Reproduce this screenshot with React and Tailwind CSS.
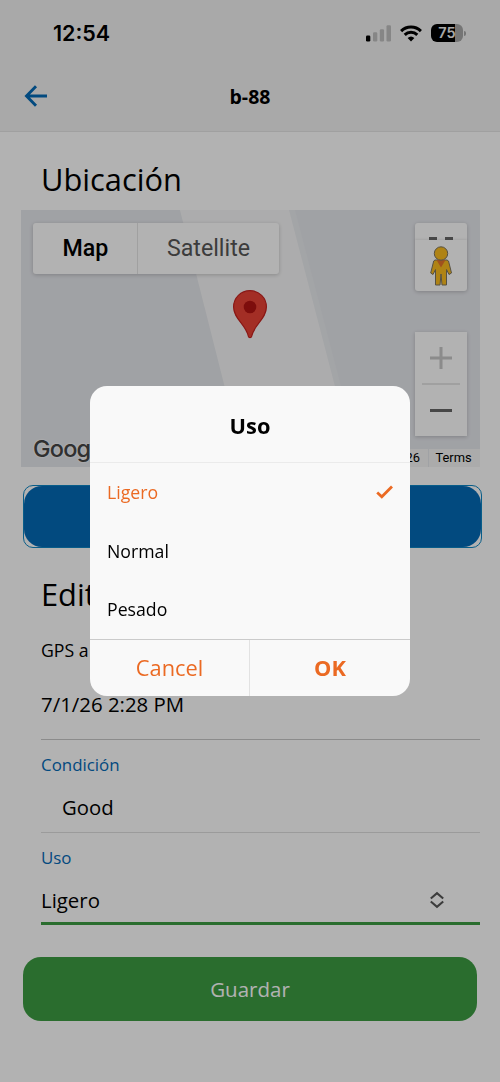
// App.jsx
import React, { useState } from "react";

const options = ["Ligero", "Normal", "Pesado"];

const StatusBar = () => (
  <div className="flex h-[66px] items-center justify-between pl-[53px] pr-[34px]">
    <span className="pt-px font-['Inter'] text-[21.5px] font-semibold leading-none">
      12:54
    </span>
    <div className="flex items-center">
      <svg width="26" height="17" viewBox="0 0 26 17" className="mr-[8px]">
        <rect x="0" y="10.5" width="4.3" height="6" rx="1.2" fill="#000" />
        <rect x="7" y="7.3" width="4.3" height="9.2" rx="1.2" fill="#c0c0c0" />
        <rect x="13.8" y="4.2" width="4.3" height="12.3" rx="1.2" fill="#c0c0c0" />
        <rect x="20.5" y="0.3" width="4.5" height="16.2" rx="1.2" fill="#c0c0c0" />
      </svg>
      <svg width="22" height="17" viewBox="0 0 22 17" className="mr-[9px]" fill="none" stroke="#000" strokeWidth="3">
        <path d="M1.1 6.1a14.2 14.2 0 0 1 19.8 0" />
        <path d="M4.7 9.9a9 9 0 0 1 12.6 0" />
        <path d="M7.6 13.1a5 5 0 0 1 6.8 0L11 16.5z" fill="#000" stroke="none" />
      </svg>
      <div className="flex h-[18px] w-[32px] items-center justify-center rounded-[6px] bg-[linear-gradient(90deg,#000_75%,#a8a8a8_75%)] pt-px font-['Inter'] text-[14.5px] font-semibold leading-none text-[#f3f3f3]">
        75
      </div>
      <div className="ml-px h-[5px] w-[2px] rounded-r-full bg-[#a8a8a8]" />
    </div>
  </div>
);

const Header = () => (
  <header className="h-[132px] border-b border-[#e6e6e6] bg-[#f3f3f3]">
    <StatusBar />
    <div className="grid h-[61px] grid-cols-3 items-center px-6">
      <svg width="24" height="22" viewBox="0 0 24 22" fill="none" stroke="#046ab7" strokeWidth="2.9" className="mb-px">
        <path d="M23 11H2.5M12 1.3 2.5 11l9.5 9.7" />
      </svg>
      <h1 className="text-center text-[19.5px] font-bold">b-88</h1>
    </div>
  </header>
);

const Pegman = () => (
  <svg width="22" height="40" viewBox="0 0 22 40" stroke="#7c7460" strokeWidth="1">
    <path
      d="M5 14h12l1.5 1 3 12-2.5 1.500-2.500-5v15.500h-4.500L11 28l-1 11H5.500V23.500L3 28.500.7 27l3-12z"
      fill="#fbbc1f"
    />
    <path d="M6.5 14h9L11 21.5z" fill="#e5752c" stroke="none" />
    <circle cx="11" cy="7.5" r="6.7" fill="#fbbc1f" />
  </svg>
);

const MapView = () => (
  <div className="relative ml-[21px] h-[257px] w-[459px] overflow-hidden bg-[#e6e8ed] font-['Roboto']">
    <svg className="absolute inset-0" width="459" height="257" viewBox="0 0 459 257">
      <path d="M159 0h110l67 257H224z" fill="#f7f7f8" />
      <path d="M268 0h6l67 257h-6z" fill="#eaecf0" />
    </svg>

    <div className="absolute left-3 top-[13px] flex h-[51px] rounded-[3px] bg-white text-[23.2px] shadow-[0_1px_4px_rgba(0,0,0,0.2)]">
      <div className="flex w-[105px] items-center justify-center border-r border-[#e6e6e6] pl-px font-medium">
        Map
      </div>
      <div className="flex w-[141px] items-center justify-center text-[#565656]">
        Satellite
      </div>
    </div>

    <svg className="absolute left-[212px] top-[80px]" width="34" height="49" viewBox="0 0 34 49">
      <path
        d="M17 .7C7.8.7.6 7.9.6 17c0 12 12.4 17.5 14.8 29.5.3 1.5 2.9 1.5 3.2 0C21 34.5 33.4 29 33.4 17 33.4 7.9 26.2.7 17 .7z"
        fill="#ea4335"
        stroke="#c5221f"
        strokeWidth="1.2"
      />
      <circle cx="17" cy="17" r="6.3" fill="#b31412" />
    </svg>

    <div className="absolute right-[13px] top-[13px] h-[68px] w-[52px] rounded-[3px] bg-white shadow-[0_1px_4px_rgba(0,0,0,0.2)]">
      <div className="flex h-[17px] items-end justify-center gap-2">
        <span className="h-[3px] w-2 bg-[#666]" />
        <span className="h-[3px] w-2 bg-[#666]" />
      </div>
      <div className="flex h-[51px] items-center justify-center shadow-[0_-1px_2px_rgba(0,0,0,0.08)]">
        <Pegman />
      </div>
    </div>

    <div className="absolute right-[13px] top-[122px] flex h-[104px] w-[52px] flex-col items-center bg-white shadow-[0_1px_4px_rgba(0,0,0,0.2)]">
      <div className="flex h-[51px] items-center">
        <svg width="22" height="22" viewBox="0 0 22 22" stroke="#c8c8c8" strokeWidth="3">
          <path d="M11 0v22M0 11h22" />
        </svg>
      </div>
      <div className="h-[2px] w-[38px] bg-[#e6e6e6]" />
      <div className="flex h-[51px] items-center">
        <span className="h-[3px] w-[22px] bg-[#666]" />
      </div>
    </div>

    <span className="absolute bottom-0 left-3 font-['Inter'] text-[23.5px] font-medium leading-[37px] tracking-[-0.8px] text-[#464646] [text-shadow:0_0_2px_#fff,0_0_2px_#fff]">
      Google
    </span>

    <div className="absolute bottom-0 right-0 flex h-[18px] items-center text-[12.9px] leading-none">
      <span className="flex h-full items-center bg-[#f5f5f5] px-2">
        Map data ©2026
      </span>
      <span className="ml-px flex h-full w-[51px] items-center justify-center bg-[#f5f5f5] pr-[2px]">
        Terms
      </span>
    </div>
  </div>
);

const EditForm = ({ usage }) => (
  <section className="pl-[41px] pr-5">
    <h2 className="pt-[25px] text-[30.8px] leading-[42px]">Edit</h2>
    <p className="mt-[23px] text-[17.7px] leading-6">GPS a</p>
    <div className="mt-[14px] h-[64px] border-b border-[#c8c8c8] pt-3 text-[20.4px] leading-8">
      7/1/26 2:28 PM
    </div>
    <div className="h-[93px] border-b border-[#dedede] pt-[13px]">
      <div className="text-[16.9px] leading-6 text-[#046ab7]">Condición</div>
      <div className="mt-[14px] pl-[21px] text-[20.3px] leading-8">Good</div>
    </div>
    <div className="h-[92px] border-b-[3px] border-[#3d9d43] pt-[13px]">
      <div className="text-[16.9px] leading-6 text-[#046ab7]">Uso</div>
      <div className="mt-[14px] flex items-center justify-between pr-9 text-[20.4px] leading-8">
        {usage}
        <svg width="14" height="18" viewBox="0 0 14 18" fill="none" stroke="#565656" strokeWidth="2.1">
          <path d="M.8 7.500 7 2.200 13.200 7.500M.8 10.500 7 15.800l6.200-5.300" />
        </svg>
      </div>
    </div>
  </section>
);

const UsageDialog = ({ selected, onSelect }) => (
  <div className="fixed inset-0 bg-black/30">
    <div
      role="dialog"
      className="ml-[90px] mt-[386px] h-[310px] w-[320px] overflow-hidden rounded-[17px] bg-[#f9f9f9]"
    >
      <h2 className="flex h-[77px] items-center justify-center border-b border-[#ebebeb] pt-1 text-[21.8px] font-bold">
        Uso
      </h2>
      <div className="grid h-[176px] grid-rows-3">
        {options.map((option) => (
          <button
            key={option}
            onClick={() => onSelect(option)}
            className={
              option === selected
                ? "flex items-center justify-between px-[17px] text-[17.7px] text-[#eb6a23]"
                : "flex items-center justify-between px-[17px] text-[17.7px]"
            }
          >
            {option}
            {option === selected && (
              <svg width="17" height="14" viewBox="0 0 17 14" fill="none" stroke="#eb6a23" strokeWidth="2.8">
                <path d="m1.2 7.500 4.600 4.200L16 1.500" />
              </svg>
            )}
          </button>
        ))}
      </div>
      <div className="flex h-[57px] border-t border-[#cbcbcb] text-[21.8px] text-[#eb6a23]">
        <button className="w-[160px] border-r border-[#e2e2e2] pt-px">Cancel</button>
        <button className="w-[160px] pt-px font-bold">OK</button>
      </div>
    </div>
  </div>
);

const App = () => {
  const [usage, setUsage] = useState("Ligero");

  return (
    <div className="h-[1082px] w-[500px] overflow-hidden bg-white font-['Open_Sans',sans-serif] text-black">
      <Header />
      <h2 className="h-[78px] pl-[41px] pt-[26px] text-[30.8px] leading-[42px]">
        Ubicación
      </h2>
      <MapView />
      <div className="ml-[23px] mt-[18px] h-[63px] w-[459px] rounded-[10px] border border-[#0c86c4]">
        <div className="h-full rounded-[18px] bg-[#046ab7]" />
      </div>
      <EditForm usage={usage} />
      <button className="ml-[23px] mt-8 h-16 w-[454px] rounded-[18px] bg-[#3d9d43] text-[20.5px] text-white">
        Guardar
      </button>
      <UsageDialog selected={usage} onSelect={setUsage} />
    </div>
  );
};

export default App;
